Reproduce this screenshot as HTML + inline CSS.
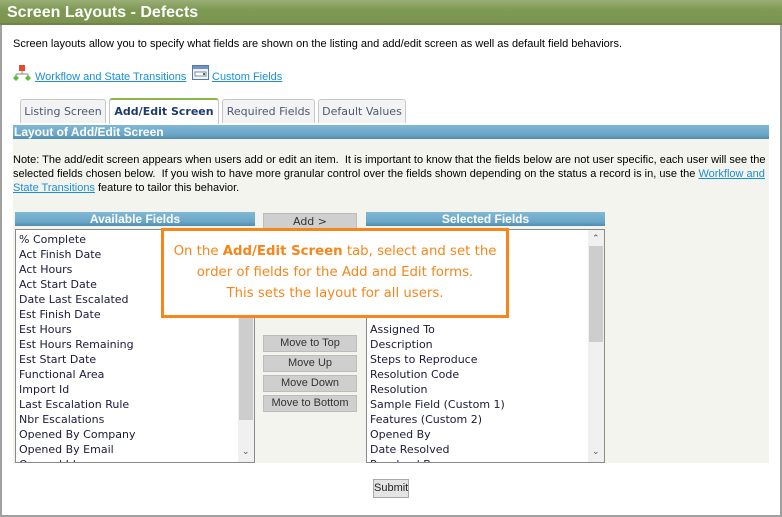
<!DOCTYPE html>
<html><head><meta charset="utf-8"><style>
*{margin:0;padding:0;box-sizing:border-box}
body{width:782px;height:517px;background:#fff;position:relative;overflow:hidden;font-family:"Liberation Sans",Arial,sans-serif;font-size:11px;color:#000}
.a{position:absolute}
#frame{left:0;top:0;width:782px;height:517px;border:2px solid #a0a0a0;border-top:none}
#title{left:0;top:0;width:782px;height:25px;background:linear-gradient(#9bad78,#7f9a55 40%,#7a9450);color:#fff;font-weight:bold;font-size:16px;padding:4px 0 0 7px;border-bottom:2px solid #6d8546}
a{color:#1a8fd6;text-decoration:underline}
.tab{top:99px;height:24px;border:1px solid #c8c8c8;border-bottom:none;border-radius:3px 3px 0 0;background:#f3f3f3;color:#4a5a7a;font-family:"DejaVu Sans",sans-serif;font-size:11px;text-align:center;padding-top:5px}
.tab.on{background:#fff;border-top:2px solid #8ab84a;color:#1e3a6e;font-weight:bold;top:98px;height:26px}
.bar{background:linear-gradient(#80b8d4,#6aa6c6 70%,#4f8cae);color:#fff;font-weight:bold;font-size:12px;height:14px;line-height:14px}
#panel{left:13px;top:139px;width:756px;height:324px;background:#f4f4ee}
.list{background:#fff;border:1px solid #8a8a8a;font-family:"DejaVu Sans",sans-serif;font-size:11px;line-height:15px;color:#1a1a3a;padding:2px 0 0 3px;overflow:hidden}
.sb{top:0;right:0;width:16px;height:100%;background:#f0f0f0}
.thumb{left:1px;width:14px;background:#cdcdcd}
.btn{width:94px;height:17px;background:#cfcfcf;border:1px solid #bdbdbd;font-size:11px;color:#333;text-align:center;line-height:15px}
</style></head><body>
<div class="a" id="frame"></div>
<div class="a" id="title">Screen Layouts - Defects</div>
<div class="a" style="left:13px;top:38px">Screen layouts allow you to specify what fields are shown on the listing and add/edit screen as well as default field behaviors.</div>
<svg class="a" style="left:13px;top:64px" width="18" height="18"><rect x="6" y="1" width="6" height="6" fill="#e54a2a"/><path d="M9 7v3M3 10h12M3 10v3M15 10v3" stroke="#888" fill="none"/><path d="M3 11l3 3-3 3-3-3z M15 11l3 3-3 3-3-3z" fill="#5cbd3c"/></svg>
<a class="a" style="left:35px;top:71px">Workflow and State Transitions</a>
<svg class="a" style="left:192px;top:65px" width="17" height="15"><rect x="0.5" y="0.5" width="16" height="14" fill="#eef4fb" stroke="#5577aa"/><rect x="1" y="1" width="15" height="3" fill="#6f93c8"/><rect x="3" y="7" width="11" height="4" fill="#fff" stroke="#889"/><rect x="11" y="8" width="2" height="2" fill="#2a8a2a"/></svg>
<a class="a" style="left:212px;top:71px">Custom Fields</a>
<div class="a tab" style="left:20px;width:86px">Listing Screen</div>
<div class="a tab on" style="left:109px;width:110px">Add/Edit Screen</div>
<div class="a tab" style="left:222px;width:93px">Required Fields</div>
<div class="a tab" style="left:318px;width:88px">Default Values</div>
<div class="a bar" style="left:13px;top:125px;width:756px;padding-left:1px">Layout of Add/Edit Screen</div>
<div class="a" id="panel"></div>
<div class="a" style="left:13px;top:153px;width:760px;line-height:14px;font-size:11px">Note: The add/edit screen appears when users add or edit an item.&nbsp; It is important to know that the fields below are not user specific, each user will see the selected fields chosen below.&nbsp; If you wish to have more granular control over the fields shown depending on the status a record is in, use the <a>Workflow and State Transitions</a> feature to tailor this behavior.</div>
<div class="a bar" style="left:15px;top:212px;width:240px;text-align:center">Available Fields</div>
<div class="a bar" style="left:366px;top:212px;width:239px;text-align:center">Selected Fields</div>
<div class="a list" style="left:15px;top:229px;width:240px;height:234px">% Complete<br>Act Finish Date<br>Act Hours<br>Act Start Date<br>Date Last Escalated<br>Est Finish Date<br>Est Hours<br>Est Hours Remaining<br>Est Start Date<br>Functional Area<br>Import Id<br>Last Escalation Rule<br>Nbr Escalations<br>Opened By Company<br>Opened By Email<br>Opened Id
<div class="a sb"><div class="a thumb" style="top:16px;height:174px"></div><div class="a" style="left:4px;bottom:2px;font-size:9px;color:#555">&#8964;</div></div></div>
<div class="a list" style="left:366px;top:229px;width:239px;height:234px">&nbsp;<br>&nbsp;<br>&nbsp;<br>&nbsp;<br>&nbsp;<br>&nbsp;<br>Assigned To<br>Description<br>Steps to Reproduce<br>Resolution Code<br>Resolution<br>Sample Field (Custom 1)<br>Features (Custom 2)<br>Opened By<br>Date Resolved<br>Resolved By
<div class="a sb"><div class="a" style="left:4px;top:2px;font-size:9px;color:#555">&#8963;</div><div class="a thumb" style="top:16px;height:96px"></div><div class="a" style="left:4px;bottom:2px;font-size:9px;color:#555">&#8964;</div></div></div>
<div class="a btn" style="left:263px;top:213px;font-family:'DejaVu Sans',sans-serif">Add &gt;</div>
<div class="a btn" style="left:263px;top:335px">Move to Top</div>
<div class="a btn" style="left:263px;top:355px">Move Up</div>
<div class="a btn" style="left:263px;top:375px">Move Down</div>
<div class="a btn" style="left:263px;top:395px">Move to Bottom</div>
<div class="a" style="left:161px;top:228px;width:348px;height:90px;background:#fff;border:3px solid #f7861a;color:#f7861a;font-family:'DejaVu Sans',sans-serif;font-size:13.3px;line-height:21px;text-align:center;padding-top:10px">On the <b>Add/Edit Screen</b> tab, select and set the<br>order of fields for the Add and Edit forms.<br>This sets the layout for all users.</div>
<div class="a" style="left:373px;top:479px;width:36px;height:19px;background:#e4e4e4;border:1px solid #a8a8a8;font-size:11px;text-align:center;line-height:17px;color:#222">Submit</div>
</body></html>
